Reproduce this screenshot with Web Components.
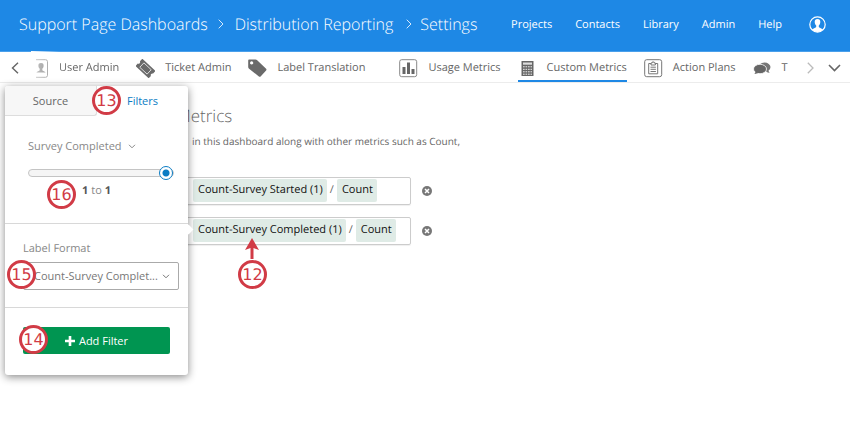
<!DOCTYPE html>
<html lang="en">
<head>
<meta charset="utf-8">
<title>Custom Metrics</title>
<style>
  html, body { margin: 0; min-height: 100%; background: #fff; }
  body { font: 11px/16px "Open Sans", "Noto Sans", sans-serif; color: #666; overflow: hidden; text-rendering: geometricPrecision; }
</style>
</head>
<body>
<settings-page></settings-page>
<script>
const define = (name, html, setup) => {
  const template = document.createElement('template');
  template.innerHTML = html;
  customElements.define(name, class extends HTMLElement {
    constructor() {
      super();
      this.attachShadow({ mode: 'open' }).append(template.content.cloneNode(true));
    }
    connectedCallback() { if (setup) setup(this, this.shadowRoot); }
  });
};

define('app-header', `
<style>
  :host { display: flex; align-items: center; justify-content: space-between; height: 48px; padding: 0 24px 3px 19px;
    background: #1e88e5; border-bottom: 1px solid #4aa0eb; color: #fff; position: relative; }
  :host::after { content: ""; position: absolute; left: 31px; bottom: -1px; width: 28px; height: 1px;
    background: linear-gradient(90deg, #fff, #fff0); }
  .crumbs { display: flex; align-items: center; font-size: 16px; font-weight: 300; line-height: 24px; white-space: nowrap; }
  .crumbs svg { width: 6px; height: 10px; margin: 0 11px 0 10px; }
  .crumbs svg + a + svg { margin: 0 8px 0 13px; }
  .links { display: flex; align-items: center; gap: 23px; font-weight: 500; white-space: nowrap; line-height: 18px; }
  .links a { padding-top: 2px; }
  a { color: inherit; text-decoration: none; }
  button { border: 0; padding: 0; background: none; margin-left: 4px; width: 17px; height: 17px; }
  button svg { display: block; }
</style>
<nav class="crumbs" aria-label="Breadcrumb">
  <a href="#">Support Page Dashboards</a>
  <svg viewBox="0 0 6 10" fill="none" stroke="#d6eafc"><path d="M.7.7 5 5 .7 9.3"/></svg>
  <a href="#">Distribution Reporting</a>
  <svg viewBox="0 0 6 10" fill="none" stroke="#d6eafc"><path d="M.7.7 5 5 .7 9.3"/></svg>
  <a href="#">Settings</a>
</nav>
<nav class="links" aria-label="Main">
  <a href="#">Projects</a><a href="#">Contacts</a><a href="#">Library</a><a href="#">Admin</a><a href="#">Help</a>
  <button aria-label="Account"><svg width="17" height="17" viewBox="0 0 17 17">
    <circle cx="8.5" cy="8.5" r="7.7" fill="none" stroke="#fff" stroke-width="1.2"/>
    <path fill="#fff" d="M8.5 3C6.600 3 5.600 4.200 5.700 6c.1 1.700.8 2.800 1.500 3.600v1.300c-.3.900-2.500 1.300-4.300 2.300 1.400 1.700 3.300 2.700 5.600 2.700s4.200-1 5.600-2.700c-1.800-1-4-1.400-4.300-2.300V9.600c.7-.8 1.400-1.900 1.500-3.600C11.400 4.200 10.400 3 8.500 3z"/>
  </svg></button>
</nav>`);

define('nav-item', `
<style>
  :host { display: block; }
  a { display: grid; grid-template-columns: 19px auto; column-gap: 10px; align-items: center; height: 27px; padding-top: 5px;
    color: #666; text-decoration: none; white-space: nowrap; box-sizing: border-box; }
  :host([active]) { border-bottom: 2px solid #1e88e5; }
  ::slotted(svg) { display: block; }
</style>
<a href="#"><slot name="icon"></slot><slot></slot></a>`);

define('nav-strip', `
<style>
  :host { display: flex; height: 30px; border-bottom: 1px solid #ececec; padding-right: 9px; background: #fff; }
  button { border: 0; background: none; padding: 0; display: flex; align-items: center; height: 32px; }
  .back { padding: 0 11px; }
  .items { display: flex; flex: 1; gap: 17px; overflow: hidden; }
  .group { margin-left: 17px; }
  .faded { -webkit-mask-image: linear-gradient(90deg, #0003, #0008 6px, #000c 18px, #000 40px); mask-image: linear-gradient(90deg, #0003, #0008 6px, #000c 18px, #000 40px); }
  .more { gap: 14px; }
</style>
<button class="back" aria-label="Scroll left"><svg width="8" height="12" fill="none" stroke="#666" stroke-width="1.4"><path d="M7 .8 1.500 6 7 11.200"/></svg></button>
<nav class="items" aria-label="Settings">
  <nav-item class="faded"><svg slot="icon" width="19" height="19" fill="none" stroke="#777"><path d="M6 .7h9.500q2 0 2 2v13.600q0 2-2 2H6" stroke="#999"/><path fill="#888" stroke="none" d="M11 4c-2 0-2.800 1.300-2.600 3 .1 1.300.7 2.200 1.300 2.800v1.400c-.5.800-2.500.8-3.300 2.300h9.200c-.8-1.500-2.800-1.500-3.300-2.300V9.800c.6-.6 1.200-1.500 1.300-2.800C13.800 5.300 13 4 11 4z"/></svg>User Admin</nav-item>
  <nav-item><svg slot="icon" width="19" height="19" viewBox="0 0 19 19"><g transform="rotate(43 9.500 9.500)"><path fill="#6a6a6a" d="M.5 4.500h18V8a1.700 1.700 0 0 0 0 3.200v3.300H.5v-3.300A1.700 1.700 0 0 0 .5 8z"/><path fill="none" stroke="#fff" stroke-width=".7" d="M4.500 6.500h10v6h-10z"/></g></svg>Ticket Admin</nav-item>
  <nav-item><svg slot="icon" width="19" height="19"><path fill="#6a6a6a" fill-rule="evenodd" d="M1 .5h6.500q1 0 1.700.7l8.900 8.500q.8.900 0 1.700l-5.500 6q-.9.800-1.700 0L.8 9.500Q.2 8.800.2 8V1.500q0-1 .8-1zm2.600 1.800a1.600 1.600 0 1 0 .1 0z"/></svg>Label Translation</nav-item>
  <nav-item class="group"><svg slot="icon" width="19" height="19"><rect x=".7" y=".7" width="17" height="17" rx="2" fill="none" stroke="#888"/><path fill="#666" d="M3.500 8h3v7h-3zM8 3.500h3V15H8zM12.500 10h3v5h-3z"/></svg>Usage Metrics</nav-item>
  <nav-item active><svg slot="icon" width="19" height="19"><path fill="#666" d="M3.500 2h12v15h-12z"/><path fill="#ddd" d="M5 3.500h9v2.200H5z"/><path stroke="#fff" stroke-width=".9" stroke-dasharray="1.700 .8" d="M5 7.800h9M5 10.300h9M5 12.800h9M5 15.200h9"/></svg>Custom Metrics</nav-item>
  <nav-item><svg slot="icon" width="19" height="19" fill="none" stroke="#777"><rect x=".7" y=".7" width="17" height="17" rx="2"/><path d="M7 4.500H4.700v10.300h9V4.500h-2.300M7 6V4h1.200V3h2v1h1.200v2zM6.500 8.200h5.400M6.500 10.300h5.400M6.500 12.500h5.400"/></svg>Action Plans</nav-item>
  <nav-item><svg slot="icon" width="19" height="19"><path fill="#777" d="M11 4c3.300 0 6 1.900 6 4.500 0 1.300-.6 2.300-1.500 3.100.1.900.5 1.500 1.200 2.100-1.300.1-2.400-.3-3.300-1z"/><ellipse cx="11.500" cy="8" rx="6" ry="4.400" fill="#777"/><ellipse cx="7" cy="10" rx="6.500" ry="4.700" fill="#666" stroke="#fff" stroke-width=".8"/><path fill="#666" d="M2.500 12.500c0 1-.5 1.800-1.200 2.500 1.700.1 3-.5 4-1.200z"/></svg>T</nav-item>
</nav>
<button class="more" aria-label="More settings"><svg width="7" height="12" fill="none" stroke="#bbb" stroke-width="1.300"><path d="M.8.8 6 6 .8 11.200"/></svg><svg width="13" height="8" fill="none" stroke="#666" stroke-width="1.600"><path d="M1 1l5.500 5.500L12 1"/></svg></button>`);

define('metric-chip', `
<style>
  :host { display: block; padding: 3px 4px 4px 5px; border-radius: 2px; background: #dfebe6; color: #111; white-space: nowrap; }
</style><slot></slot>`);

define('metric-row', `
<style>
  :host { display: flex; align-items: center; gap: 11px; }
  .box { display: flex; align-items: center; gap: 3px; width: 217px; height: 24px; padding: 0 0 2px 19px;
    border: 1px solid #ccc; border-radius: 2px; box-shadow: 0 1px 1px #0001; }
  button { border: 0; padding: 0; background: none; width: 10px; height: 10px; }
  svg { display: block; }
</style>
<div class="box" role="group"><slot></slot></div>
<button aria-label="Remove metric"><svg width="10" height="10"><circle cx="5" cy="5" r="5" fill="#777"/><path d="M3 3l4 4M7 3 3 7" stroke="#fff" stroke-width="1.500"/></svg></button>`);

define('filter-popover', `
<style>
  :host { display: block; position: absolute; left: 5px; top: 86px; width: 183px; background: #fff; border-radius: 3px;
    box-shadow: 0 2px 9px #0007; }
  :host::after { content: ""; position: absolute; left: 180px; top: 140px; width: 7px; height: 7px; background: #fff; transform: rotate(45deg); }
  button { font: inherit; color: inherit; border: 0; background: none; padding: 0; }
  .tabs { display: flex; height: 30px; }
  .tabs button { flex: 1; }
  .tabs .off { background: #f7f7f7; border: solid #ddd; border-width: 0 1px 1px 0; border-radius: 3px 0 3px 0; }
  .tabs .on { color: #0a7cc4; }
  .range { padding: 22px 14px 24px 23px; color: #888; }
  .field { display: flex; align-items: center; gap: 6px; }
  input { appearance: none; -webkit-appearance: none; display: block; width: 100%; height: 14px; margin: 12px 0 3px; background: none; }
  input::-webkit-slider-runnable-track { height: 8px; box-sizing: border-box; border: 1px solid #c4c4c4; border-radius: 4px; background: #f5f5f5; }
  input::-webkit-slider-thumb { -webkit-appearance: none; width: 14px; height: 14px; margin-top: -4px; border-radius: 50%;
    border: 1px solid #0a7cc4; background: radial-gradient(circle, #0a7cc4 0 3px, #fff 4px); box-sizing: border-box; }
  output { display: block; text-align: center; padding-right: 9px; }
  b { color: #555; }
  .format { padding: 17px 9px 17px 18px; border: solid #d8d8d8; border-width: 1px 0; color: #888; }
  label { display: block; margin-bottom: 5px; }
  .pick { display: grid; align-items: center; }
  .pick > * { grid-area: 1 / 1; }
  .pick svg { justify-self: end; margin-right: 9px; pointer-events: none; }
  select { appearance: none; -webkit-appearance: none; font: inherit; color: #777; width: 100%; height: 28px; padding: 0 0 0 10px;
    border: 1px solid #aaa; border-radius: 2px; background: #fff; }
  .foot { padding: 19px 18px 21px; }
  .foot button { display: flex; justify-content: center; align-items: center; gap: 4px; width: 100%; height: 27px;
    border-radius: 2px; background: #009551; color: #fff; font-weight: 500; }
</style>
<div class="tabs" role="tablist"><button class="off" role="tab">Source</button><button class="on" role="tab" aria-selected="true">Filters</button></div>
<div class="range">
  <button class="field">Survey Completed <svg width="8" height="5" fill="none" stroke="#888"><path d="M1 .8l3 3 3-3"/></svg></button>
  <input type="range" min="0" max="1" value="1" aria-label="Survey Completed">
  <output><b>1</b> to <b>1</b></output>
</div>
<div class="format">
  <label for="format">Label Format</label>
  <div class="pick"><select id="format"><option>Count-Survey Complet...</option></select><svg width="8" height="5" fill="none" stroke="#777"><path d="M1 .8l3 3 3-3"/></svg></div>
</div>
<div class="foot"><button><svg width="10" height="10"><path d="M5 0v10M0 5h10" stroke="#fff" stroke-width="2.600"/></svg>Add Filter</button></div>`);

define('step-marker', `
<style>
  :host { position: absolute; left: var(--x); top: var(--y); display: grid; place-items: center; box-sizing: border-box;
    width: 29px; height: 29px; border: 3px solid #d13b46; border-radius: 50%; background: #fff; color: #d13b46;
    font: 16px/20px "DejaVu Sans", sans-serif; }
  svg { display: none; position: absolute; left: 4px; top: -25px; }
  :host([arrow]) svg { display: block; }
</style><slot></slot>
<svg width="14" height="21"><path fill="#d13b46" d="M7 0l7 12-5.500-2V21h-3V10L0 12z"/></svg>`, el => {
  el.style.setProperty('--x', el.getAttribute('x') + 'px');
  el.style.setProperty('--y', el.getAttribute('y') + 'px');
});

define('settings-page', `
<style>
  :host { display: block; position: relative; min-height: 425px; }
  main { padding: 21px 24px 0 173px; }
  h1 { margin: 0 0 5px; padding-left: 3px; font-size: 17px; line-height: 24px; font-weight: 300; color: #666; }
  p { margin: 0 0 28px 19px; font-size: 10px; }
  .rows { display: grid; gap: 12px; }
</style>
<app-header></app-header>
<nav-strip></nav-strip>
<main>
  <h1>Metrics</h1>
  <p>in this dashboard along with other metrics such as Count,</p>
  <div class="rows">
    <metric-row><metric-chip>Count-Survey Started (1)</metric-chip>/<metric-chip>Count</metric-chip></metric-row>
    <metric-row><metric-chip>Count-Survey Completed (1)</metric-chip>/<metric-chip>Count</metric-chip></metric-row>
  </div>
</main>
<filter-popover></filter-popover>
<step-marker x="92" y="86">13</step-marker>
<step-marker x="47" y="180">16</step-marker>
<step-marker x="7" y="260">15</step-marker>
<step-marker x="19" y="325">14</step-marker>
<step-marker x="238" y="260" arrow>12</step-marker>`);
</script>
</body>
</html>
